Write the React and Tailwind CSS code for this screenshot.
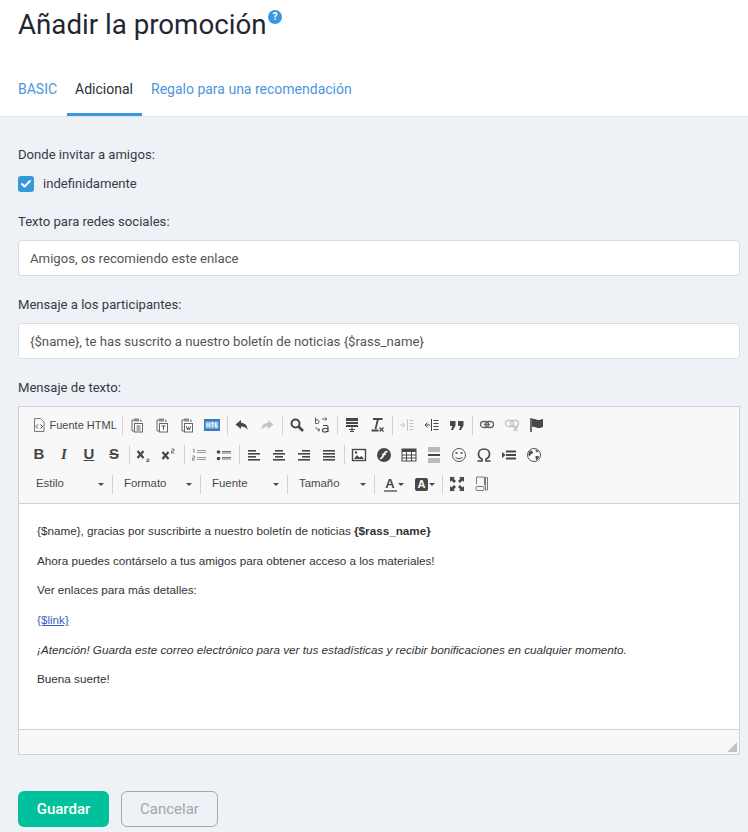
import { Check } from "lucide-react";

const ink = "#474747";
const faint = "#c4c4c4";

function Ico({ children, w = 16, h = 16 }) {
  return (
    <svg width={w} height={h} viewBox={`0 0 ${w} ${h}`} fill="none" stroke={ink} strokeWidth="1" className="shrink-0">
      {children}
    </svg>
  );
}

function Lines({ rows, c = ink }) {
  return (
    <Ico>
      {rows.map(([x1, x2, y], i) => (
        <rect key={i} x={x1} y={y} width={x2 - x1} height="1.6" fill={c} stroke="none" />
      ))}
    </Ico>
  );
}

function Clip({ letter }) {
  return (
    <Ico>
      <path d="M5 3H3v11h2" stroke="#666" />
      <rect x="5" y="1.5" width="5" height="3" fill="#888" stroke="none" />
      <path d="M11 3h1v2" stroke="#666" />
      <rect x="5.5" y="6.5" width="8" height="8.5" stroke="#666" fill="#fff" />
      {letter === "t" && <path d="M7.5 9h4M9.500 9v4" stroke="#555" />}
      {letter === "x" && <path d="M7.500 9h4M7.500 11h4M7.500 13h4" stroke="#555" />}
      {letter === "w" && <path d="M7.500 9l1 4 1-2.500 1 2.500 1-4" stroke="#555" />}
    </Ico>
  );
}

const icons = {
  source: (
    <Ico>
      <path d="M3.500 1.500h6l3.500 3.500v9.500h-9.500z" stroke="#777" />
      <path d="M7 7.500l-2 2 2 2M9.500 7.500l2 2-2 2" stroke="#444" />
    </Ico>
  ),
  pasteX: <Clip letter="x" />,
  pasteT: <Clip letter="t" />,
  pasteW: <Clip letter="w" />,
  html: (
    <svg width="16" height="12" viewBox="0 0 16 12" className="shrink-0">
      <rect width="16" height="12" fill="#3d7ab8" />
      <rect x="1.500" y="2.500" width="13" height="7" fill="#8fc0e8" />
      <path d="M3 4v4M5.500 4v4M3 6h2.500M7 4h3M8.500 4v4M11.500 8V4h.5v4h2" stroke="#fff" strokeWidth=".8" fill="none" />
    </svg>
  ),
  undo: (
    <Ico>
      <path d="M7 3L1.500 7.500 7 12V9.500c3 0 5 .8 6.500 3.500 0-4.500-2.500-7-6.500-7.300z" fill={ink} stroke="none" />
    </Ico>
  ),
  redo: (
    <Ico>
      <path d="M9 3l5.500 4.500L9 12V9.500c-3 0-5 .8-6.500 3.500 0-4.500 2.500-7 6.500-7.300z" fill={faint} stroke="none" />
    </Ico>
  ),
  find: (
    <Ico>
      <circle cx="6.500" cy="6.500" r="4" strokeWidth="2" />
      <path d="M9.500 9.500l4.500 4.500" strokeWidth="2.600" />
    </Ico>
  ),
  replace: (
    <Ico>
      <path d="M1.500 .5v6M1.500 3.500c2-1.500 3.500-.5 3.500 1.200S3.500 7.500 1.500 6" stroke="#555" />
      <path d="M8 2h4.500M11 .5L13 2l-2 1.500M2 10c0 2 1 3 3.500 3M4 11.500L6 13l-2 1.500" stroke="#666" />
      <path d="M9 8.500h3.500c1 0 1.500.5 1.500 1.500v5M14 11.500h-3.500c-1.500 0-2 .7-2 1.700S9.500 15 10.500 15c1.500 0 3.500-.5 3.500-2" stroke="#444" strokeWidth="1.200" />
    </Ico>
  ),
  template: (
    <Ico>
      <rect x="2" y="1" width="12" height="3" fill={ink} stroke="none" />
      <rect x="2" y="5" width="12" height="2" fill={ink} stroke="none" />
      <rect x="2" y="8" width="12" height="2" fill={ink} stroke="none" />
      <path d="M5 12.500h6M8 10v4M6 14.500h4" stroke={ink} />
    </Ico>
  ),
  clear: (
    <Ico>
      <path d="M4 2h9.500M9 2L6.500 12M2.500 13.500h7" stroke={ink} strokeWidth="1.800" />
      <path d="M10.500 10.500l4 4M14.500 10.500l-4 4" stroke={ink} strokeWidth="1.300" />
    </Ico>
  ),
  outdent: (
    <Ico>
      <path d="M8.500 2v12M1 8h5M3.500 5.500L6 8l-2.500 2.500M10.500 3.500h4M10.500 6.500h4M10.500 9.500h4M10.500 12.500h4" stroke={faint} />
    </Ico>
  ),
  indent: (
    <Ico>
      <path d="M7.500 2v12M1 8h5M3.500 5.500L1 8l2.500 2.500M9.500 3.500h5M9.500 6.500h5M9.500 9.500h5M9.500 12.500h5" stroke={ink} />
    </Ico>
  ),
  quote: (
    <Ico>
      <path d="M1 4h5.500v4.500L4 13H2l1.500-4H1zM9 4h5.500v4.500L12 13h-2l1.500-4H9z" fill={ink} stroke="none" />
    </Ico>
  ),
  link: (
    <Ico>
      <rect x="1.500" y="4.500" width="8" height="6" rx="3" strokeWidth="1.300" stroke="#666" />
      <rect x="6.500" y="4.500" width="8" height="6" rx="3" strokeWidth="1.300" stroke="#666" />
      <path d="M5 7.500h6" strokeWidth="1.300" stroke="#666" />
    </Ico>
  ),
  unlink: (
    <Ico>
      <rect x="1.500" y="3.500" width="8" height="6" rx="3" strokeWidth="1.300" stroke={faint} />
      <rect x="6.500" y="3.500" width="8" height="6" rx="3" strokeWidth="1.300" stroke={faint} />
      <path d="M9.500 10l4 4M13.500 10l-4 4" strokeWidth="1.300" stroke={faint} />
    </Ico>
  ),
  flag: (
    <Ico>
      <path d="M2 1v14" strokeWidth="1.600" stroke={ink} />
      <path d="M3 2c3-1 4 1 6 1s3-.5 5-1v8c-2 .8-3 1-5 1s-3-2-6-1z" fill={ink} stroke="none" />
    </Ico>
  ),
  sub: (
    <Ico>
      <path d="M1.500 4l6 7M7.500 4l-6 7" strokeWidth="2.200" stroke={ink} />
      <path d="M10 14.500h3.500M10.500 12h2.500v1.300h-2.500" stroke="#777" />
    </Ico>
  ),
  sup: (
    <Ico>
      <path d="M1.500 5l6 7M7.500 5l-6 7" strokeWidth="2.200" stroke={ink} />
      <path d="M10 6h3.500M10.500 2h2.500v2h-2.500v2" stroke="#777" />
    </Ico>
  ),
  ol: (
    <Ico>
      <path d="M6 3.500h9M6 5.500h9M6 10.500h9M6 12.500h9" stroke="#999" />
      <path d="M2 2h1v4M1 13h3M1.500 9h2v2h-2v2" stroke="#888" />
    </Ico>
  ),
  ul: (
    <Ico>
      <circle cx="2.500" cy="5" r="1.800" fill={ink} stroke="none" />
      <circle cx="2.500" cy="11.500" r="1.800" fill={ink} stroke="none" />
      <path d="M6 4.500h9M6 6h9M6 10.500h9M6 12h9" stroke="#777" />
    </Ico>
  ),
  left: <Lines rows={[[2, 10, 3], [2, 14, 6], [2, 10, 9], [2, 14, 12]]} />,
  center: <Lines rows={[[4, 12, 3], [2, 14, 6], [4, 12, 9], [2, 14, 12]]} />,
  right: <Lines rows={[[6, 14, 3], [2, 14, 6], [6, 14, 9], [2, 14, 12]]} />,
  justify: <Lines rows={[[2, 14, 3], [2, 14, 6], [2, 14, 9], [2, 14, 12]]} />,
  image: (
    <Ico>
      <rect x="1.500" y="2.500" width="13" height="11" stroke={ink} strokeWidth="1.400" fill="#fff" />
      <path d="M3 12l3-4 2.500 2.500L10.500 9l2.500 3z" fill={ink} stroke="none" />
      <circle cx="5" cy="5.500" r="1.200" fill={ink} stroke="none" />
    </Ico>
  ),
  flash: (
    <Ico>
      <circle cx="8" cy="8" r="7" fill={ink} stroke="none" />
      <path d="M11.500 4.500C8.500 4.500 8 6.500 7.500 8s-1 3.500-3.500 3.500" stroke="#fff" strokeWidth="1.600" />
      <path d="M6 7.500h4" stroke="#fff" strokeWidth="1.300" />
    </Ico>
  ),
  table: (
    <Ico>
      <rect x="1" y="2" width="14" height="12" fill="#fff" stroke={ink} />
      <rect x="1" y="2" width="14" height="3" fill={ink} stroke="none" />
      <path d="M5.500 5v9M10.500 5v9M1 8h14M1 11h14" stroke={ink} />
    </Ico>
  ),
  hr: (
    <Ico>
      <rect x="2" y="0" width="12" height="5" fill="#bbb" stroke="none" />
      <rect x="2" y="7" width="12" height="2" fill={ink} stroke="none" />
      <rect x="2" y="11" width="12" height="5" fill="#bbb" stroke="none" />
    </Ico>
  ),
  smile: (
    <Ico>
      <circle cx="8" cy="8" r="6.500" stroke="#555" />
      <circle cx="5.500" cy="6" r="1.100" fill="#555" stroke="none" />
      <circle cx="10.500" cy="6" r="1.100" fill="#555" stroke="none" />
      <path d="M4.500 10c1.500 2.300 5.500 2.300 7 0" stroke="#555" />
    </Ico>
  ),
  omega: (
    <Ico>
      <path d="M1.500 14h4.500v-2C3.500 11 2.500 9 2.500 7c0-3 2.300-5 5.500-5s5.500 2 5.500 5c0 2-1 4-3.500 5v2h4.500" stroke={ink} strokeWidth="1.700" />
    </Ico>
  ),
  pagebreak: (
    <Ico>
      <path d="M1 5l3.500 3L1 11z" fill={ink} stroke="none" />
      <path d="M5 4.500h10M5 8h10M5 11.500h10" stroke={ink} strokeWidth="2" />
    </Ico>
  ),
  globe: (
    <Ico>
      <circle cx="8" cy="8" r="6.500" stroke="#555" fill="#fff" />
      <path d="M4 3.500c1.500 0 2.500.5 3 1.500S6 7 5 7.500 4 10 3 9 2 6 4 3.500zM9.500 2.500l1.500.5 1.500 1.500-1.500 1-1.500-1.500zM9.500 9h3l.5 1.500-2.500 3-1-2.500z" fill="#555" stroke="none" />
    </Ico>
  ),
  maximize: (
    <Ico>
      <path d="M1 1h5L4.500 2.500 7 5 5 7 2.500 4.500 1 6zM15 1v5l-1.500-1.500L11 7 9 5l2.500-2.500L10 1zM1 15v-5l1.500 1.500L5 9l2 2-2.500 2.500L6 15zM15 15h-5l1.500-1.500L9 11l2-2 2.500 2.500L15 10z" fill={ink} stroke="none" />
    </Ico>
  ),
  blocks: (
    <Ico>
      <path d="M2.500 1h8v8M2.500 1v7M11.500 1.500h2v12.500h-2z" stroke="#777" />
      <rect x="2" y="10.500" width="8" height="4" rx="1" stroke="#777" />
    </Ico>
  ),
};

function Btn({ name }) {
  return <span className="w-[25px] h-[24px] flex items-center justify-center shrink-0">{icons[name]}</span>;
}

function Glyph({ children, className }) {
  return (
    <span className={`w-[25px] h-[24px] flex items-center justify-center shrink-0 text-[#474747] text-[15px] font-bold ${className}`}>
      {children}
    </span>
  );
}

function Sep() {
  return (
    <span className="w-[5px] h-[24px] flex items-center justify-center shrink-0">
      <span className="w-px h-[19px] bg-[#d2d2d2]"></span>
    </span>
  );
}

function Arrow() {
  return <span className="w-0 h-0 border-x-[3px] border-x-transparent border-t-[3px] border-t-[#474747]"></span>;
}

function Combo({ label, w }) {
  return (
    <span className={`${w} h-[24px] pl-[9.500px] pr-[6px] flex items-center justify-between shrink-0 text-[11.400px] text-[#484848]`}>
      {label}
      <Arrow />
    </span>
  );
}

function ColorBtn({ boxed }) {
  return (
    <span className="w-[31.500px] h-[24px] pl-[7px] flex items-center gap-[1px] shrink-0">
      {boxed ? (
        <span className="w-[13px] h-[13px] rounded-[2px] bg-[#474747] text-white text-[11px] font-bold flex items-center justify-center">A</span>
      ) : (
        <span className="w-[13px] h-[15px] border-b-2 border-[#888] text-[#474747] text-[13px] leading-[13px] font-bold text-center">A</span>
      )}
      <Arrow />
    </span>
  );
}

function Toolbar() {
  return (
    <div className="bg-[#f8f8f8] border-b border-[#d1d1d1] h-[97px] pl-[7.500px] pt-[6px] flex flex-col gap-[5.500px] font-['Liberation_Sans',sans-serif]">
      <div className="flex items-center h-[24px]">
        <span className="w-[93px] h-[24px] pl-[4px] flex items-center gap-[3px] shrink-0 whitespace-nowrap text-[11px] text-[#484848]">
          {icons.source}Fuente HTML
        </span>
        <Sep />
        <Btn name="pasteX" />
        <Btn name="pasteT" />
        <Btn name="pasteW" />
        <Btn name="html" />
        <Sep />
        <Btn name="undo" />
        <Btn name="redo" />
        <Sep />
        <Btn name="find" />
        <Btn name="replace" />
        <Sep />
        <Btn name="template" />
        <Btn name="clear" />
        <Sep />
        <Btn name="outdent" />
        <Btn name="indent" />
        <Btn name="quote" />
        <Sep />
        <Btn name="link" />
        <Btn name="unlink" />
        <Btn name="flag" />
      </div>
      <div className="flex items-center h-[24px]">
        <Glyph>B</Glyph>
        <Glyph className="italic font-['Liberation_Serif',serif]">I</Glyph>
        <Glyph className="underline">U</Glyph>
        <Glyph className="line-through">S</Glyph>
        <Sep />
        <Btn name="sub" />
        <Btn name="sup" />
        <Sep />
        <Btn name="ol" />
        <Btn name="ul" />
        <Sep />
        <Btn name="left" />
        <Btn name="center" />
        <Btn name="right" />
        <Btn name="justify" />
        <Sep />
        <Btn name="image" />
        <Btn name="flash" />
        <Btn name="table" />
        <Btn name="hr" />
        <Btn name="smile" />
        <Btn name="omega" />
        <Btn name="pagebreak" />
        <Btn name="globe" />
      </div>
      <div className="flex items-center h-[24px]">
        <Combo label="Estilo" w="w-[83px]" />
        <Sep />
        <Combo label="Formato" w="w-[83px]" />
        <Sep />
        <Combo label="Fuente" w="w-[82px]" />
        <Sep />
        <Combo label="Tamaño" w="w-[82px]" />
        <Sep />
        <ColorBtn />
        <ColorBtn boxed />
        <Sep />
        <Btn name="maximize" />
        <Btn name="blocks" />
      </div>
    </div>
  );
}

function Field({ label, value }) {
  return (
    <div>
      <div className="text-[13.100px] leading-[20px] text-[#333b47] mb-[8px]">{label}</div>
      <div className="h-[36px] bg-white border border-[#d9dce1] rounded-[4px] px-[11px] pt-[2px] flex items-center text-[13.200px] text-[#555]">
        {value}
      </div>
    </div>
  );
}

export default function App() {
  return (
    <div className="w-[748px] h-[832px] overflow-hidden bg-[#eef1f6] font-['Roboto',sans-serif]">
      <div className="h-[117px] bg-white border-b border-[#dfe2e8] relative">
        <h1 className="absolute left-[18px] top-[7px] text-[27.700px] leading-[36px] font-normal text-[#1f2733]">
          Añadir la promoción
          <span className="absolute left-[250px] top-[3px] w-[14px] h-[14px] rounded-full bg-[#3a97dd] text-white text-[10px] leading-[14px] font-bold text-center">?</span>
        </h1>
        <div className="absolute left-[9px] bottom-0 flex text-[14px] leading-[20px]">
          <span className="pl-[9px] pr-[9px] pt-[8px] pb-[14px] text-[#4a97dd]">BASIC</span>
          <span className="pl-[8px] pr-[9px] pt-[8px] pb-[14px] text-[#2a3039] border-b-[3px] border-[#3498db] ml-[1px]">Adicional</span>
          <span className="px-[9px] pt-[8px] pb-[14px] text-[#4a97dd]">Regalo para una recomendación</span>
        </div>
      </div>

      <div className="px-[18px] pr-[8px] pt-[28px]">
        <div className="text-[13.100px] leading-[20px] text-[#333b47]">Donde invitar a amigos:</div>
        <label className="flex items-center gap-[9px] mt-[9px] h-[20px] text-[13.100px] text-[#333b47]">
          <span className="w-[16px] h-[16px] rounded-[3px] bg-[#3498db] flex items-center justify-center">
            <Check size={12} color="#fff" strokeWidth={4} />
          </span>
          indefinidamente
        </label>
        <div className="mt-[18px] flex flex-col gap-[19px]">
          <Field label="Texto para redes sociales:" value="Amigos, os recomiendo este enlace" />
          <Field label="Mensaje a los participantes:" value="{$name}, te has suscrito a nuestro boletín de noticias {$rass_name}" />
        </div>

        <div className="text-[13.100px] leading-[20px] text-[#333b47] mt-[19px] mb-[8px]">Mensaje de texto:</div>
        <div className="border border-[#d1d1d1] bg-white">
          <Toolbar />
          <div className="h-[225px] px-[18px] pt-[18px] text-[11.700px] leading-[18px] text-[#333] flex flex-col gap-[11.700px] font-['Liberation_Sans',sans-serif]">
            <p>
              {"{$name}, gracias por suscribirte a nuestro boletín de noticias "}
              <strong>{"{$rass_name}"}</strong>
            </p>
            <p>Ahora puedes contárselo a tus amigos para obtener acceso a los materiales!</p>
            <p>Ver enlaces para más detalles:</p>
            <p>
              <a className="text-[#3b5fc4] underline">{"{$link}"}</a>
            </p>
            <p>
              <em>¡Atención! Guarda este correo electrónico para ver tus estadísticas y recibir bonificaciones en cualquier momento.</em>
            </p>
            <p>Buena suerte!</p>
          </div>
          <div className="h-[25px] bg-[#f8f8f8] border-t border-[#d1d1d1] flex items-end justify-end pr-[2px] pb-[2px]">
            <span className="w-0 h-0 border-l-[10px] border-l-transparent border-b-[10px] border-b-[#c4c4c4]"></span>
          </div>
        </div>

        <div className="mt-[36px] flex gap-[12px] text-[15px]">
          <button className="w-[91px] h-[36px] rounded-[6px] bg-[#00c19c] text-white font-medium">Guardar</button>
          <button className="w-[97px] h-[36px] rounded-[6px] border border-[#a3a7ad] text-[#a3a7ad]">Cancelar</button>
        </div>
      </div>
    </div>
  );
}
